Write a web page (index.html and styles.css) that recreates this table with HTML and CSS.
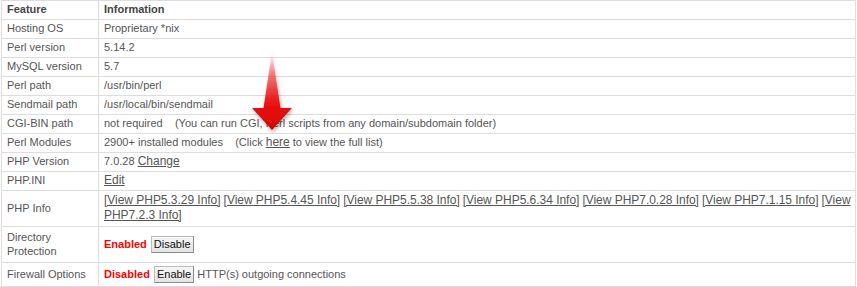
FILE: index.html
```html
<!DOCTYPE html>
<html>
<head>
<meta charset="utf-8">
<link rel="stylesheet" href="styles.css">
</head>
<body>
<div class="wrap">
<table class="info">
  <tr class="head"><th class="c1">Feature</th><th>Information</th></tr>
  <tr><td class="c1">Hosting OS</td><td>Proprietary *nix</td></tr>
  <tr><td class="c1">Perl version</td><td>5.14.2</td></tr>
  <tr><td class="c1">MySQL version</td><td>5.7</td></tr>
  <tr><td class="c1">Perl path</td><td>/usr/bin/perl</td></tr>
  <tr><td class="c1">Sendmail path</td><td>/usr/local/bin/sendmail</td></tr>
  <tr><td class="c1">CGI-BIN path</td><td>not required &nbsp;&nbsp;&nbsp;(You can run CGI, Perl scripts from any domain/subdomain folder)</td></tr>
  <tr><td class="c1">Perl Modules</td><td>2900+ installed modules &nbsp;&nbsp;&nbsp;(Click <a href="#">here</a> to view the full list)</td></tr>
  <tr><td class="c1">PHP Version</td><td>7.0.28 <a href="#">Change</a></td></tr>
  <tr><td class="c1">PHP.INI</td><td><a href="#">Edit</a></td></tr>
  <tr class="tall"><td class="c1">PHP Info</td><td class="links"><a href="#">[View PHP5.3.29 Info]</a> <a href="#">[View PHP5.4.45 Info]</a> <a href="#">[View PHP5.5.38 Info]</a> <a href="#">[View PHP5.6.34 Info]</a> <a href="#">[View PHP7.0.28 Info]</a> <a href="#">[View PHP7.1.15 Info]</a> <a href="#">[View PHP7.2.3 Info]</a></td></tr>
  <tr class="dir"><td class="c1">Directory<br>Protection</td><td><span class="state">Enabled</span> <button class="btn">Disable</button></td></tr>
  <tr class="fw"><td class="c1">Firewall Options</td><td><span class="state">Disabled</span> <button class="btn">Enable</button> HTTP(s) outgoing connections</td></tr>
</table>
<svg class="arrow" width="60" height="90" viewBox="0 0 60 90">
  <defs>
    <linearGradient id="g" x1="0" y1="0" x2="0" y2="1">
      <stop offset="0" stop-color="#ff3030" stop-opacity="0"/>
      <stop offset="0.3" stop-color="#f03030" stop-opacity="0.6"/>
      <stop offset="0.65" stop-color="#ea1414"/>
      <stop offset="1" stop-color="#d60000"/>
    </linearGradient>
    <filter id="s" x="-30%" y="-30%" width="160%" height="160%">
      <feGaussianBlur in="SourceAlpha" stdDeviation="2"/>
      <feOffset dx="1" dy="2"/>
      <feComponentTransfer><feFuncA type="linear" slope="0.35"/></feComponentTransfer>
      <feMerge><feMergeNode/><feMergeNode in="SourceGraphic"/></feMerge>
    </filter>
  </defs>
  <path d="M31 2 L39.5 58 L51 58 L31 80 L11 58 L22.5 58 Z" fill="url(#g)" filter="url(#s)"/>
</svg>
</div>
</body>
</html>
```
FILE: styles.css
```css
html, body {
  margin: 0;
  padding: 0;
  background: #fff;
}
.wrap {
  position: relative;
  padding: 0 0 0 1px;
}
.info {
  border-collapse: collapse;
  width: 855px;
  font-family: "Liberation Sans", Arial, sans-serif;
  font-size: 11px;
  color: #555;
}
.info th, .info td {
  border: 1px solid #ddd;
  padding: 2px 5px 3px;
  height: 13px;
  line-height: 13px;
  text-align: left;
  vertical-align: middle;
}
.info th {
  font-weight: bold;
  color: #444;
}
.info .c1 {
  width: 86px;
}
.info a {
  color: #555;
  font-size: 12px;
  text-decoration: underline;
}
.info td.links {
  padding-right: 1px;
  letter-spacing: -0.03px;
}
.tall td {
  height: 29px;
  line-height: 15px;
}
.dir td {
  line-height: 14px;
  padding-top: 3px;
  padding-bottom: 4px;
}
.fw td {
  padding-top: 3px;
  padding-bottom: 3px;
}
.state {
  color: #f00;
  font-weight: bold;
  font-size: 11px;
}
.btn {
  font-family: "Liberation Sans", Arial, sans-serif;
  font-size: 11px;
  color: #111;
  background: linear-gradient(#f6f6f6, #e4e4e4);
  border: 1px solid #bbb;
  border-right-color: #888;
  border-bottom-color: #888;
  padding: 1px 2px;
  margin: 0 0 0 1px;
  line-height: 13px;
  border-radius: 0;
}
.arrow {
  position: absolute;
  left: 241px;
  top: 50px;
}
```
